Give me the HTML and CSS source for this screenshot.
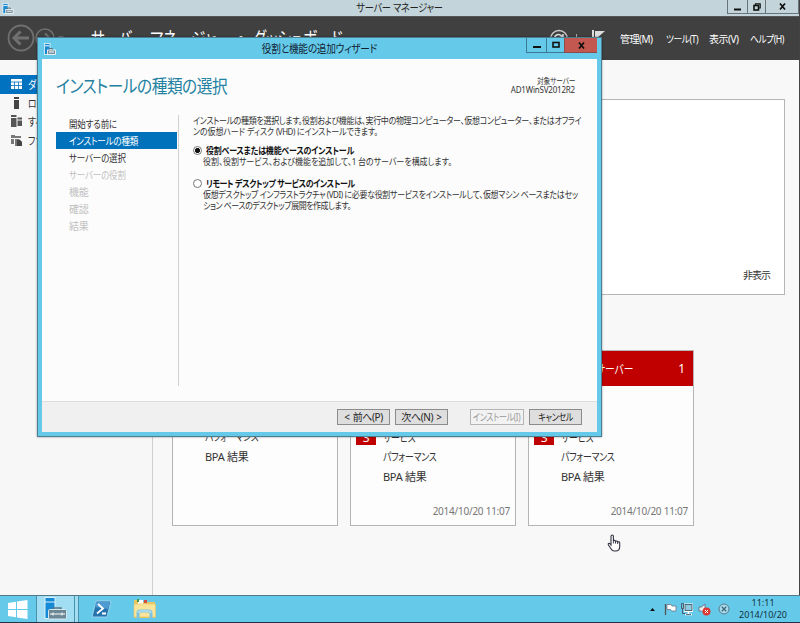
FILE: index.html
```html
<!DOCTYPE html>
<html lang="ja">
<head>
  <meta charset="utf-8">
  <title>サーバー マネージャー</title>
  <link rel="stylesheet" href="styles.css">
</head>
<body>
  <svg width="0" height="0" class="defs">
    <symbol id="server" viewBox="0 0 12 12">
      <rect x="0.5" y="0.5" width="5.5" height="11" fill="#1787cf" stroke="#fff" stroke-width="0.7"/>
      <path d="M1 2.8h4.5" stroke="#fff"/>
      <path d="M5.5 7V5.5h3V7" fill="none" stroke="#58717d"/>
      <rect x="3.5" y="7" width="8" height="4.5" fill="#78919e" stroke="#fff" stroke-width="0.8"/>
      <path d="M5 9h5" stroke="#fff"/>
    </symbol>
  </svg>

  <div class="manager">
    <!-- Title bar -->
    <div class="titlebar">
      <svg class="title-icon" width="12" height="11"><use href="#server"/></svg>
      <span class="title-text">サーバー マネージャー</span>
      <div class="win-buttons">
        <span class="win-btn min"><svg width="8" height="8"><path d="M0 6.5h7" stroke="#111" stroke-width="2"/></svg></span>
        <span class="win-btn restore"><svg width="8" height="8"><path d="M2.5 2V.8h4.7V5H6" fill="none" stroke="#111" stroke-width="1.2"/><rect x="1" y="2.5" width="4.5" height="4.5" fill="none" stroke="#111" stroke-width="1.6"/></svg></span>
        <span class="win-btn close"><svg width="7" height="7"><path d="M1 .5l5 6M6 .5l-5 6" stroke="#111" stroke-width="1.7"/></svg></span>
      </div>
    </div>

    <!-- Dark header with navigation and menus -->
    <div class="header">
      <svg class="back" width="58" height="32">
        <g fill="none" stroke="#707070">
          <circle cx="14" cy="16" r="12.5" stroke-width="1.8"/>
          <path d="M22 16H7M13.5 9.5L7 16l6.5 6.5" stroke-width="3"/>
          <circle cx="38" cy="16" r="9" stroke-width="1.5"/>
          <path d="M33 16h9M38 11.5l4.5 4.500-4.500 4.500" stroke-width="2"/>
        </g>
        <path d="M51 14h6l-3 3z" fill="#707070"/>
      </svg>
      <span class="crumb">サーバー マネージャー</span>
      <span class="crumb-dot">・</span>
      <span class="crumb last">ダッシュボード</span>
      <svg class="tools" width="58" height="22">
        <circle cx="10" cy="10" r="8.5" fill="none" stroke="#ccc" stroke-width="1.3"/>
        <path d="M6 12a4 4 0 0 1 7-4.500M14 5v3.500h-3.500M14 9a4 4 0 0 1-7 4" fill="none" stroke="#ddd" stroke-width="1.5"/>
        <path d="M27.500 5v10" stroke="#aaa"/>
        <path d="M44 1v20" stroke="#ddd" stroke-width="2"/>
        <path d="M46 2h10l-8 7h-2z" fill="#ddd"/>
      </svg>
      <div class="menus">
        <span class="menu">管理(M)</span>
        <span class="menu tight">ツール(T)</span>
        <span class="menu">表示(V)</span>
        <span class="menu tight">ヘルプ(H)</span>
      </div>
    </div>

    <div class="content">
      <div class="sidebar">
        <div class="side-item active">
          <svg width="13" height="12"><rect x="1" y="1" width="11" height="10" fill="#fff"/><path d="M1 4h11M4.500 4v7M8.500 4v7M1 7.500h11" stroke="#0072c0" stroke-width=".8"/></svg>
          <span>ダッシュボード</span>
        </div>
        <div class="side-item">
          <svg width="13" height="12"><path d="M4 0h5v2H4zM4 3h5v9H4z" fill="#444"/></svg>
          <span>ローカル サーバー</span>
        </div>
        <div class="side-item">
          <svg width="13" height="12"><path d="M1 0h5.500v2H1zM1 3h5.500v9H1zM7.500 2.500h4.500v2H7.500zM7.500 5.500h4.500v5.500H7.500z" fill="#555"/></svg>
          <span>すべてのサーバー</span>
        </div>
        <div class="side-item">
          <svg width="13" height="12"><path d="M1 1h4v1h6v2H1zM1 5h3v5H1zM5 5h4l3 3v4H5z" fill="#777"/><path d="M7 6h3l2 2v4H7z" fill="#444"/></svg>
          <span>ファイル サービス</span>
        </div>
      </div>

      <div class="main">
        <div class="welcome"><span>非表示</span></div>
        <div class="cards">
          <div class="card">
            <div class="rows short">
              <div class="row"><span class="kana">パフォーマンス</span></div>
              <div class="row">BPA 結果</div>
            </div>
          </div>
          <div class="card">
            <div class="rows">
              <div class="row"><b class="badge">3</b><span class="kana">サービス</span></div>
              <div class="row"><span class="kana">パフォーマンス</span></div>
              <div class="row">BPA 結果</div>
            </div>
            <div class="stamp">2014/10/20 11:07</div>
          </div>
          <div class="card">
            <div class="card-head"><span class="kana">すべてのサーバー</span><span>1</span></div>
            <div class="rows">
              <div class="row"><b class="badge">3</b><span class="kana">サービス</span></div>
              <div class="row"><span class="kana">パフォーマンス</span></div>
              <div class="row">BPA 結果</div>
            </div>
            <div class="stamp">2014/10/20 11:07</div>
          </div>
        </div>
      </div>
    </div>
  </div>

  <!-- Add roles and features wizard -->
  <div class="wizard">
    <div class="wizard-bar">
      <svg class="wizard-icon" width="12" height="12"><use href="#server"/></svg>
      <span class="wizard-title">役割と機能の追加ウィザード</span>
      <div class="wizard-buttons">
        <span class="wb"><svg width="8" height="8"><path d="M0 6h8" stroke="#111" stroke-width="2"/></svg></span>
        <span class="wb max"><svg width="8" height="8"><rect x="1" y="1.500" width="6" height="4.500" fill="none" stroke="#111" stroke-width="1.600"/></svg></span>
        <span class="wb red"><svg width="7" height="7"><path d="M1 .5l5 6M6 .5l-5 6" stroke="#111" stroke-width="1.700"/></svg></span>
      </div>
    </div>
    <div class="wizard-body">
      <div class="wizard-head">
        <h1>インストールの種類の選択</h1>
        <div class="target">
          <div class="target-label">対象サーバー</div>
          <div>AD1WinSV2012R2</div>
        </div>
      </div>
      <div class="wizard-main">
        <div class="steps">
          <div class="step"><span>開始する前に</span></div>
          <div class="step current"><span>インストールの種類</span></div>
          <div class="step"><span>サーバーの選択</span></div>
          <div class="step off"><span>サーバーの役割</span></div>
          <div class="step off">機能</div>
          <div class="step off">確認</div>
          <div class="step off">結果</div>
        </div>
        <div class="page">
          <div class="intro">
            <div class="line full">インストールの種類を選択します。役割および機能は、実行中の物理コンピューター、仮想コンピューター、またはオフライ</div>
            <div class="line w185">ンの仮想ハード ディスク (VHD) にインストールできます。</div>
          </div>
          <div class="option">
            <span class="radio checked"></span>
            <div class="line bold w148">役割ベースまたは機能ベースのインストール</div>
          </div>
          <div class="desc">
            <div class="line w249">役割、役割サービス、および機能を追加して、1 台のサーバーを構成します。</div>
          </div>
          <div class="option second">
            <span class="radio"></span>
            <div class="line bold w149">リモート デスクトップ サービスのインストール</div>
          </div>
          <div class="desc">
            <div class="line w375">仮想デスクトップ インフラストラクチャ (VDI) に必要な役割サービスをインストールして、仮想マシン ベースまたはセッ</div>
            <div class="line w148">ション ベースのデスクトップ展開を作成します。</div>
          </div>
        </div>
      </div>
      <div class="wizard-foot">
        <button>&lt; 前へ(P)</button>
        <button>次へ(N) &gt;</button>
        <button class="disabled"><span>インストール(I)</span></button>
        <button><span>キャンセル</span></button>
      </div>
    </div>
  </div>

  <svg class="cursor" width="14" height="18" viewBox="0 0 14 18">
    <path d="M4 11V2.200a1.200 1.200 0 0 1 2.400 0V7c.4-1 2-.8 2.200.4.5-.8 2-.5 2.100.6.700-.6 2-.1 2 .9v3.600c0 2.500-1.500 4.500-4 4.500H7.500c-2 0-3-1-3.700-2.500L1.300 10.800c-.5-1 .8-1.900 1.600-1.100z" fill="#fff" stroke="#334" stroke-width="1.100"/>
    <path d="M6.400 7v2.500M8.600 7.500v2.200M10.700 8v2" stroke="#334" stroke-width=".9"/>
  </svg>

  <!-- Taskbar -->
  <div class="taskbar">
    <div class="start">
      <svg width="20" height="19" viewBox="0 0 20 19"><path d="M0 3l8-1.300V9H0zM9 1.500L19.500 0v9H9zM0 10h8v7.300L0 16zM9 10h10.500v9L9 17.500z" fill="#fff"/></svg>
    </div>
    <div class="task running">
      <svg width="24" height="24" viewBox="0 0 24 24"><rect x="1" y=".5" width="10" height="21" fill="#1489d5" stroke="#d6f2fc"/><path d="M1 5h10" stroke="#d6f2fc"/><path d="M9 13v-2h8v2" fill="none" stroke="#587687" stroke-width="1.500"/><rect x="4.500" y="12.500" width="18" height="9.500" rx="1" fill="#6c8796" stroke="#d5e8ef"/><path d="M6 17h15M9 15.500v3M18 15.500v3" fill="none" stroke="#fff"/></svg>
    </div>
    <div class="task-edge"></div>
    <div class="task">
      <svg width="21" height="18" viewBox="0 0 21 18"><path d="M5 1h15l-4 16H1z" fill="#2673ad" stroke="#9bd2ec"/><path d="M5 2h14l-2 7-13-2z" fill="#4d9bd0"/><path d="M7 4l5 4.500-6 5M11 13.500h4" fill="none" stroke="#fff" stroke-width="1.800"/></svg>
    </div>
    <div class="task">
      <svg width="24" height="22" viewBox="0 0 24 22"><path d="M1 2h7l2 2h12v16H1z" fill="#e9c762"/><path d="M5 2h5v4H5z" fill="#fff"/><path d="M4 1h2v3H4z" fill="#449a4b"/><path d="M11 2h3v3h-3z" fill="#d44c3a"/><path d="M1 6h21.500v13H1z" fill="#f8e59b" stroke="#e4c66b" stroke-width=".7"/><path d="M5 20v-5q0-2 2-2h9q2 0 2 2v5" fill="none" stroke="#7cc3e2" stroke-width="3"/><path d="M5 15q0-2 2-2h9q2 0 2 2" fill="none" stroke="#d3effa"/></svg>
    </div>
    <div class="tray">
      <svg width="82" height="16" viewBox="0 0 82 16">
        <path d="M1 10h5L3.500 7z" fill="#111"/>
        <path d="M16.500 3v11" stroke="#555" stroke-width="1.300"/><path d="M18 3.500h4l1 1.500h4v5h-4.500l-1-1.500H18z" fill="#fff" stroke="#667" stroke-width=".7"/>
        <rect x="36" y="3.500" width="7" height="6.500" fill="#a9dbed" stroke="#fff" stroke-width="2"/><path d="M39.500 10v3M36 13.500h7" fill="none" stroke="#fff" stroke-width="1.500"/><rect x="36" y="3.500" width="7" height="6" fill="#8fcbe0" stroke="#334b58" stroke-width=".8"/><path d="M32.500 2.500h2v5h-2zM33.500 8v4.500h3M37 13.500h5" fill="none" stroke="#445" stroke-width=".8"/>
        <path d="M50 6h2.500L56 3v10l-3.500-3H50z" fill="#eee" stroke="#567" stroke-width=".8"/><circle cx="57.500" cy="10.500" r="4" fill="#dd3731"/><path d="M56 9l3 3M59 9l-3 3" stroke="#fff"/>
        <circle cx="75" cy="8" r="5" fill="#a5dced" stroke="#567a8b"/><path d="M72.800 5.800l4.400 4.400M77.200 5.800l-4.400 4.400" stroke="#456879" stroke-width="1.300"/>
      </svg>
      <div class="clock">
        <div>11:11</div>
        <div>2014/10/20</div>
      </div>
    </div>
  </div>
</body>
</html>
```
FILE: styles.css
```css
* {
  box-sizing: border-box;
}
body {
  margin: 0;
  width: 800px;
  height: 623px;
  overflow: hidden;
  position: relative;
  background: #f8f8f8;
  font-family: "Noto Sans", "Noto Sans CJK JP", sans-serif;
  font-feature-settings: "palt";
  font-size: 10px;
  color: #333;
  white-space: nowrap;
}
svg {
  display: block;
  flex: none;
}
.defs {
  position: absolute;
}
/* Narrow kana, as in the Windows UI font */
.kana,
.side-item span,
.step span {
  display: inline-block;
  transform: scaleX(0.81);
  transform-origin: left center;
}

/* Server manager window */
.manager {
  height: 595px;
  display: flex;
  flex-direction: column;
  border-right: 1px solid #444;
}
.titlebar {
  height: 16px;
  display: grid;
  grid-template-columns: 1fr auto 1fr;
  align-items: center;
  background: #c3d5db;
}
.title-icon {
  margin-left: 2px;
}
.title-text {
  font-size: 11px;
  line-height: 16px;
  letter-spacing: -0.3px;
  color: #222;
  transform: scaleX(0.84);
}
.win-buttons {
  display: flex;
  justify-self: end;
  align-self: start;
}
.win-btn {
  height: 14px;
  display: flex;
  align-items: center;
  justify-content: center;
  border: 1px solid #687479;
  border-top: 0;
  border-left: 0;
}
.win-btn.min {
  width: 21px;
  border-left: 1px solid #687479;
}
.win-btn.restore {
  width: 18px;
}
.win-btn.close {
  width: 33px;
}

.header {
  height: 44px;
  display: flex;
  align-items: flex-start;
  background: #404040;
  border-top: 1px solid #555;
  color: #fff;
}
.back {
  margin: 5px 0 0 7px;
}
.crumb {
  margin: 9px 0 0 26px;
  width: 138px;
  font-size: 19px;
  line-height: 26px;
  transform: scaleX(0.76);
  transform-origin: left center;
}
.crumb-dot {
  margin-top: 9px;
  width: 24px;
  text-align: center;
  font-size: 19px;
  line-height: 26px;
}
.crumb.last {
  margin-left: 0;
  width: 90px;
}
.tools {
  margin: 12px 0 0 206px;
}
.crumb.last + .tools {
  margin-left: 206px;
}
.menus {
  display: flex;
  margin: 14px 0 0 auto;
}
.menu {
  line-height: 16px;
  letter-spacing: -0.5px;
}

.content {
  flex: 1;
  display: flex;
}
.sidebar {
  width: 153px;
  padding-top: 15px;
  background: #f7f7f7;
  border-right: 1px solid #cfcfcf;
}
.side-item {
  height: 18.5px;
  padding-left: 10px;
  display: flex;
  align-items: center;
  gap: 5px;
  font-size: 11px;
}
.side-item.active {
  background: #0072c0;
  color: #fff;
}
.main {
  flex: 1;
  padding: 39px 14px 0 19px;
}
.welcome {
  height: 196px;
  display: flex;
  align-items: flex-end;
  justify-content: flex-end;
  padding: 0 14px 10px;
  background: #fff;
  border: 1px solid #b5b5b5;
  line-height: 18px;
  letter-spacing: -1px;
}
.cards {
  display: flex;
  gap: 12px;
  margin-top: 55px;
}
.card {
  width: 166px;
  height: 176px;
  position: relative;
  display: flex;
  flex-direction: column;
  justify-content: flex-end;
  background: #fdfdfd;
  border: 1px solid #b4b4b4;
}
.card-head {
  height: 35px;
  margin-bottom: auto;
  padding: 0 8px 0 31px;
  display: flex;
  align-items: center;
  justify-content: space-between;
  background: #c00000;
  color: #fff;
  font-size: 12px;
}
.rows {
  padding-left: 32px;
}
.rows.short {
  padding-bottom: 59px;
}
.row {
  height: 19.5px;
  line-height: 19.5px;
  font-size: 11px;
  letter-spacing: -0.3px;
  position: relative;
}
.badge {
  position: absolute;
  left: -27px;
  top: 2px;
  width: 20px;
  height: 15px;
  background: #c00000;
  color: #fff;
  text-align: center;
  line-height: 15px;
  font-size: 12px;
  font-weight: normal;
}
.stamp {
  margin-top: 16px;
  padding: 0 5px 5px 0;
  text-align: right;
  line-height: 18px;
  letter-spacing: -0.25px;
  color: #777;
}

/* Wizard window */
.wizard {
  position: absolute;
  left: 37px;
  top: 37px;
  width: 565px;
  height: 400px;
  padding: 0 4px 4px;
  border: 1px solid #4b7f91;
  background: #65caea;
  box-shadow: 0 0 2px rgba(0, 0, 0, 0.4);
  display: flex;
  flex-direction: column;
}
.wizard-bar {
  height: 21px;
  display: grid;
  grid-template-columns: 1fr auto 1fr;
  align-items: center;
}
.wizard-icon {
  margin-left: 2px;
}
.wizard-title {
  font-size: 11px;
  line-height: 20px;
  letter-spacing: -0.3px;
  color: #123;
  transform: scaleX(0.88);
}
.wizard-buttons {
  display: flex;
  justify-self: end;
  align-self: start;
}
.wb {
  width: 20px;
  height: 15px;
  display: flex;
  align-items: center;
  justify-content: center;
  border: 1px solid #3c7a91;
  border-top: 0;
  border-right: 0;
}
.wb.max {
  width: 18px;
}
.wb.red {
  width: 33px;
  background: #c35850;
  border-color: #8d4b4b;
}
.wizard-body {
  flex: 1;
  display: flex;
  flex-direction: column;
  background: #fcfcfc;
}
.wizard-head {
  height: 56px;
  padding: 15px 22px 0 14px;
  display: flex;
  justify-content: space-between;
}
.wizard-head h1 {
  margin: 0;
  font-size: 18px;
  font-weight: normal;
  line-height: 24px;
  letter-spacing: -0.5px;
  color: #2381a1;
  transform: scaleX(0.87);
  transform-origin: left center;
}
.target {
  padding-top: 3px;
  text-align: right;
  font-size: 8px;
  line-height: 8.5px;
  letter-spacing: -0.2px;
}
.target-label {
  transform: scaleX(0.84);
  transform-origin: right center;
}
.wizard-main {
  flex: 1;
  display: flex;
  padding: 0 16px 15px 14px;
}
.steps {
  width: 123px;
  border-right: 1px solid #d0d0d0;
}
.step {
  height: 17px;
  width: 121px;
  padding: 1px 0 0 13px;
  line-height: 16px;
  letter-spacing: -0.2px;
}
.step.current {
  background: #0072bc;
  color: #fff;
}
.step.off {
  color: #c0c0c0;
}
.step span {
  transform: scaleX(0.85);
}
.page {
  width: 400px;
  padding-left: 14px;
}
/* Lines are set wider than drawn, then squeezed to 84% */
.line {
  flex: none;
  height: 11px;
  line-height: 11px;
  font-size: 9.5px;
  letter-spacing: -0.55px;
  text-align: justify;
  text-align-last: justify;
  transform: scaleX(0.84);
  transform-origin: left center;
}
.line.full {
  width: 462px;
}
.line.w375 {
  width: 446px;
}
.line.w249 {
  width: 296px;
}
.line.w185 {
  width: 220px;
}
.line.w149 {
  width: 177px;
}
.line.w148 {
  width: 176px;
}
.bold {
  font-weight: bold;
  color: #111;
}
.option {
  display: flex;
  align-items: center;
  gap: 4px;
  margin-top: 7px;
  height: 12px;
}
.option.second {
  margin-top: 10px;
}
.radio {
  width: 9px;
  height: 9px;
  border: 1px solid #777;
  border-radius: 50%;
  background: #fff;
}
.radio.checked {
  background: radial-gradient(#111 0 2.2px, #fff 2.9px);
}
.desc {
  padding-left: 10px;
}
.wizard-foot {
  height: 31px;
  padding-right: 15px;
  display: flex;
  align-items: center;
  justify-content: flex-end;
  background: #f0f0f0;
  border-top: 1px solid #ddd;
}
.wizard-foot button {
  width: 53px;
  height: 16px;
  margin-left: 5px;
  padding: 0;
  border: 1px solid #8b8b8b;
  background: #dedede;
  font: inherit;
  line-height: 13px;
  letter-spacing: -0.4px;
  word-spacing: 1px;
  color: #222;
}
.wizard-foot button.disabled {
  width: 54px;
  margin-left: 22px;
  background: #f2f2f2;
  border-color: #b5b5b5;
  color: #999;
}
.wizard-foot button span {
  display: inline-block;
  margin: 0 -10px;
  transform: scaleX(0.8);
}

/* Menu labels sit in fixed slots */
.menus {
  margin-right: 14px;
  display: grid;
  grid-template-columns: 46px 43px 41px 35px;
}
.menu.tight {
  transform: scaleX(0.87);
  transform-origin: left center;
}

/* Mouse pointer */
.cursor {
  position: absolute;
  left: 607px;
  top: 534px;
}

/* Taskbar */
.taskbar {
  height: 28px;
  display: flex;
  background: #65caea;
  border-top: 1px solid #52788a;
  border-bottom: 1px solid #234;
}
.start {
  width: 36px;
  display: flex;
  align-items: center;
  justify-content: center;
}
.task {
  width: 44px;
  display: flex;
  align-items: center;
  justify-content: center;
}
.task.running {
  width: 39px;
  background: #a2def3;
  border: 1px solid #4d91aa;
  border-width: 0 1px;
}
.task-edge {
  width: 4px;
  background: #a2def3;
  border-right: 1px solid #4d91aa;
}
.tray {
  margin-left: auto;
  padding-right: 13px;
  display: flex;
  align-items: center;
  gap: 8px;
}
.clock {
  text-align: center;
  color: #12303c;
  line-height: 12px;
  font-size: 9px;
}
```
